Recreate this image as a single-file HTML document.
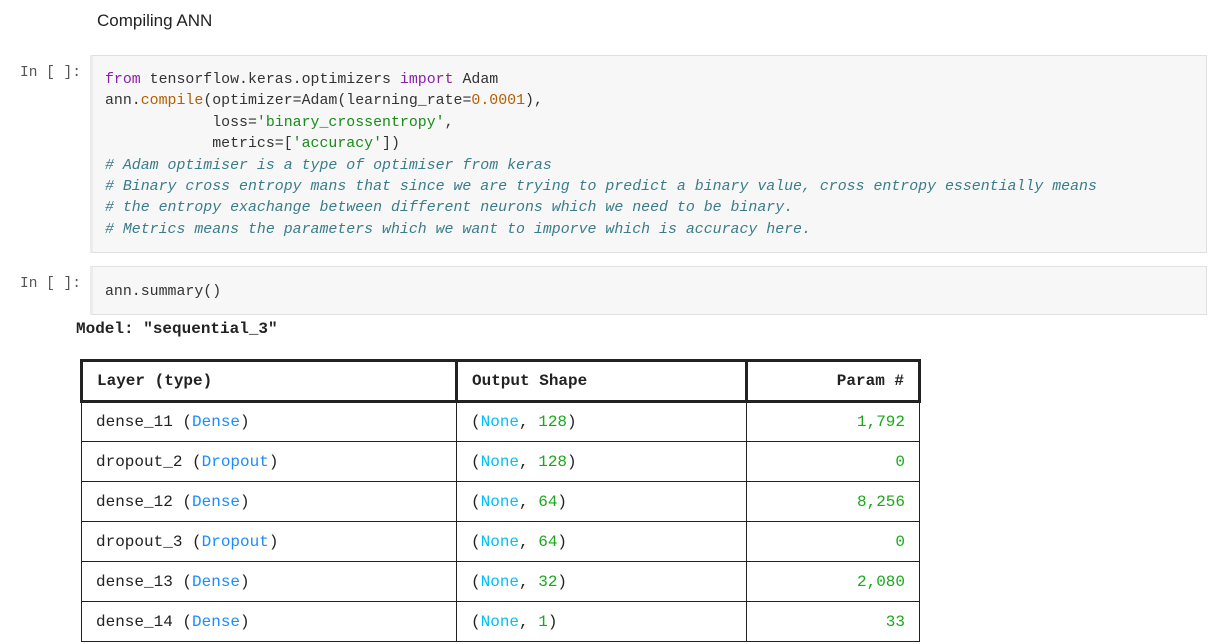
<!DOCTYPE html>
<html><head><style>
body{margin:0;background:#fff;width:1220px;height:644px;overflow:hidden;position:relative;font-family:"Liberation Sans",sans-serif}
.t{position:absolute;left:97px;top:11px;font-size:17px;color:#222}
.p{position:absolute;left:20px;font-family:"Liberation Mono",monospace;font-size:14.5px;color:#555}
.c{position:absolute;left:90px;width:1117px;background:#f7f7f7;border:1px solid #e0e0e0;border-left:3px solid #ececec;box-sizing:border-box}
pre{margin:0;font-family:"Liberation Mono",monospace;font-size:14.9px;line-height:21.4px;color:#333;position:absolute;left:12px}
.k{color:#8a1fa8}.f{color:#b35e00}.n{color:#b35e00}.s{color:#1a8a1a}.cm{color:#3a7d8a;font-style:italic}
.m{position:absolute;left:76px;top:320px;font-family:"Liberation Mono",monospace;font-weight:bold;font-size:16px;color:#222}
table{position:absolute;left:80px;top:359px;border-collapse:collapse;font-family:"Liberation Mono",monospace;font-size:16px;color:#222}
td,th{height:40px;padding:0 14px;border:1px solid #222;box-sizing:border-box}
th{border:3px solid #222;text-align:left;font-weight:bold;height:41px}
.r{text-align:right}.b{color:#1a8cff}.cy{color:#00bfff}.g{color:#1aa81a}
</style></head><body>
<div class="t">Compiling ANN</div>
<div class="p" style="top:65px">In [ ]:</div>
<div class="c" style="top:55px;height:198px"><pre style="top:14px"><span class="k">from</span> tensorflow.keras.optimizers <span class="k">import</span> Adam
ann.<span class="f">compile</span>(optimizer=Adam(learning_rate=<span class="n">0.0001</span>),
            loss=<span class="s">'binary_crossentropy'</span>,
            metrics=[<span class="s">'accuracy'</span>])
<span class="cm"># Adam optimiser is a type of optimiser from keras</span>
<span class="cm"># Binary cross entropy mans that since we are trying to predict a binary value, cross entropy essentially means</span>
<span class="cm"># the entropy exachange between different neurons which we need to be binary.</span>
<span class="cm"># Metrics means the parameters which we want to imporve which is accuracy here.</span></pre></div>
<div class="p" style="top:276px">In [ ]:</div>
<div class="c" style="top:266px;height:49px"><pre style="top:15px">ann.summary()</pre></div>
<div class="m">Model: "sequential_3"</div>
<table>
<tr><th style="width:375px">Layer (type)</th><th style="width:290px">Output Shape</th><th class="r" style="width:173px;text-align:right">Param #</th></tr>
<tr><td>dense_11 (<span class="b">Dense</span>)</td><td>(<span class="cy">None</span>, <span class="g">128</span>)</td><td class="r g">1,792</td></tr>
<tr><td>dropout_2 (<span class="b">Dropout</span>)</td><td>(<span class="cy">None</span>, <span class="g">128</span>)</td><td class="r g">0</td></tr>
<tr><td>dense_12 (<span class="b">Dense</span>)</td><td>(<span class="cy">None</span>, <span class="g">64</span>)</td><td class="r g">8,256</td></tr>
<tr><td>dropout_3 (<span class="b">Dropout</span>)</td><td>(<span class="cy">None</span>, <span class="g">64</span>)</td><td class="r g">0</td></tr>
<tr><td>dense_13 (<span class="b">Dense</span>)</td><td>(<span class="cy">None</span>, <span class="g">32</span>)</td><td class="r g">2,080</td></tr>
<tr><td>dense_14 (<span class="b">Dense</span>)</td><td>(<span class="cy">None</span>, <span class="g">1</span>)</td><td class="r g">33</td></tr>
</table>
</body></html>
